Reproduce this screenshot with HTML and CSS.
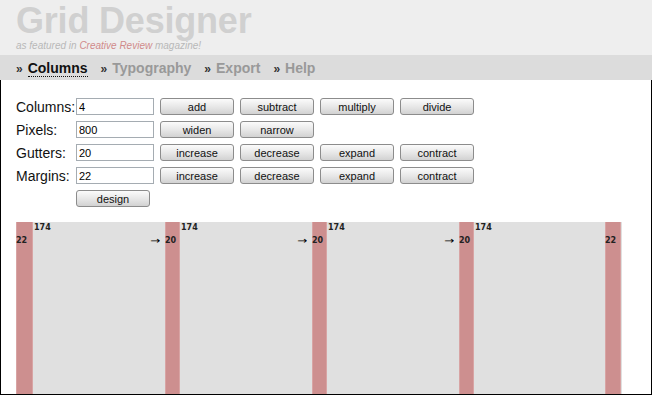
FILE: index.html
```html
<!DOCTYPE html>
<html lang="en">
<head>
    <meta charset="UTF-8">
    <title>Grid Designer</title>
    <link rel="stylesheet" href="styles.css">
</head>
<body>
    <div class="header">
        <h1>Grid Designer</h1>
        <p class="tagline">as featured in <span class="mag">Creative Review</span> magazine!</p>
    </div>
    <div class="nav">
        <a class="current" href="#"><span>Columns</span></a>
        <a href="#"><span>Typography</span></a>
        <a href="#"><span>Export</span></a>
        <a href="#"><span>Help</span></a>
    </div>
    <div class="main">
        <form class="controls">
            <div class="row">
                <label for="cols">Columns:</label>
                <input type="text" id="cols" value="4">
                <input type="button" value="add">
                <input type="button" value="subtract">
                <input type="button" value="multiply">
                <input type="button" value="divide">
            </div>
            <div class="row">
                <label for="pixels">Pixels:</label>
                <input type="text" id="pixels" value="800">
                <input type="button" value="widen">
                <input type="button" value="narrow">
            </div>
            <div class="row">
                <label for="gutters">Gutters:</label>
                <input type="text" id="gutters" value="20">
                <input type="button" value="increase">
                <input type="button" value="decrease">
                <input type="button" value="expand">
                <input type="button" value="contract">
            </div>
            <div class="row">
                <label for="margins">Margins:</label>
                <input type="text" id="margins" value="22">
                <input type="button" value="increase">
                <input type="button" value="decrease">
                <input type="button" value="expand">
                <input type="button" value="contract">
            </div>
            <div class="row">
                <span class="spacer"></span>
                <input type="button" class="design" value="design">
            </div>
        </form>

        <div class="grid">
            <div class="margin"><span>22</span></div>
            <div class="col"><span>174</span><div class="arrow">&rarr;</div></div>
            <div class="gutter"><span>20</span></div>
            <div class="col"><span>174</span><div class="arrow">&rarr;</div></div>
            <div class="gutter"><span>20</span></div>
            <div class="col"><span>174</span><div class="arrow">&rarr;</div></div>
            <div class="gutter"><span>20</span></div>
            <div class="col last"><span>174</span></div>
            <div class="margin right"><span>22</span></div>
        </div>
    </div>
</body>
</html>
```

FILE: styles.css
```css
* {
    margin: 0;
    padding: 0;
    box-sizing: border-box;
}

html, body {
    height: 100%;
    overflow: hidden;
}

body {
    font-family: "Liberation Sans", Arial, sans-serif;
    background: #fff;
    color: #111;
}

.header {
    height: 55px;
    background: #eeeeee;
    padding: 4px 16px 0;
}

.header h1 {
    font-size: 36px;
    line-height: 34px;
    font-weight: bold;
    color: #d0d0d0;
    letter-spacing: -0.2px;
}

.tagline {
    font-size: 10px;
    font-style: italic;
    color: #b8b8b8;
    margin-top: 2px;
}

.tagline .mag {
    color: #d08a8a;
}

.nav {
    height: 25px;
    background: #dcdcdc;
    padding: 5px 16px 0;
    display: flex;
    gap: 13px;
}

.nav a {
    font-size: 14px;
    font-weight: bold;
    color: #999;
    text-decoration: none;
    line-height: 16px;
}

.nav a::before {
    content: "\00bb";
    color: #333;
    font-size: 12px;
    margin-right: 5px;
}

.nav a.current {
    color: #111;
}

.nav a.current span {
    border-bottom: 1px dotted #111;
}

.main {
    height: calc(100% - 80px);
    border: 1px solid #000;
    border-top: none;
    padding: 18px 15px 0;
    overflow: hidden;
}

.controls {
    display: flex;
    flex-direction: column;
    gap: 6px;
}

.row {
    display: flex;
    align-items: center;
    gap: 6px;
    height: 17px;
}

.row label,
.row .spacer {
    width: 54px;
    font-size: 14px;
    white-space: nowrap;
}

.row input[type="text"] {
    width: 78px;
    height: 17px;
    border: 1px solid #a5acb2;
    padding: 0 2px;
    font-family: "Liberation Sans", Arial, sans-serif;
    font-size: 11px;
    color: #000;
}

.row input[type="button"] {
    width: 74px;
    height: 17px;
    border: 1px solid #8c8c8c;
    border-radius: 3px;
    background: linear-gradient(#fbfbfb, #e6e6e6 55%, #d2d2d2);
    font-family: "Liberation Sans", Arial, sans-serif;
    font-size: 11px;
    color: #111;
    cursor: pointer;
}

.grid {
    margin-top: 15px;
    width: 606px;
    height: 300px;
    display: flex;
    background: #e0e0e0;
    font-family: "DejaVu Sans", Verdana, sans-serif;
    font-size: 8px;
    font-weight: bold;
    color: #222;
}

.margin,
.gutter {
    background: #cd8f8f;
    border-left: 1px solid #d8a4a4;
    border-right: 1px solid #d8a4a4;
    padding-top: 14px;
}

.margin {
    width: 17px;
}

.margin.right {
    width: 16px;
}

.gutter {
    width: 15px;
}

.gutter span,
.margin span {
    margin-left: -1px;
}

.col {
    width: 132px;
    padding: 1px 0 0 1px;
}

.col.last {
    width: 131px;
}

.arrow {
    text-align: right;
    padding-right: 5px;
    margin-top: 3px;
    font-family: "DejaVu Sans", sans-serif;
    font-size: 12px;
    line-height: 12px;
    font-weight: normal;
    color: #000;
    transform: scaleY(0.8);
}
```
